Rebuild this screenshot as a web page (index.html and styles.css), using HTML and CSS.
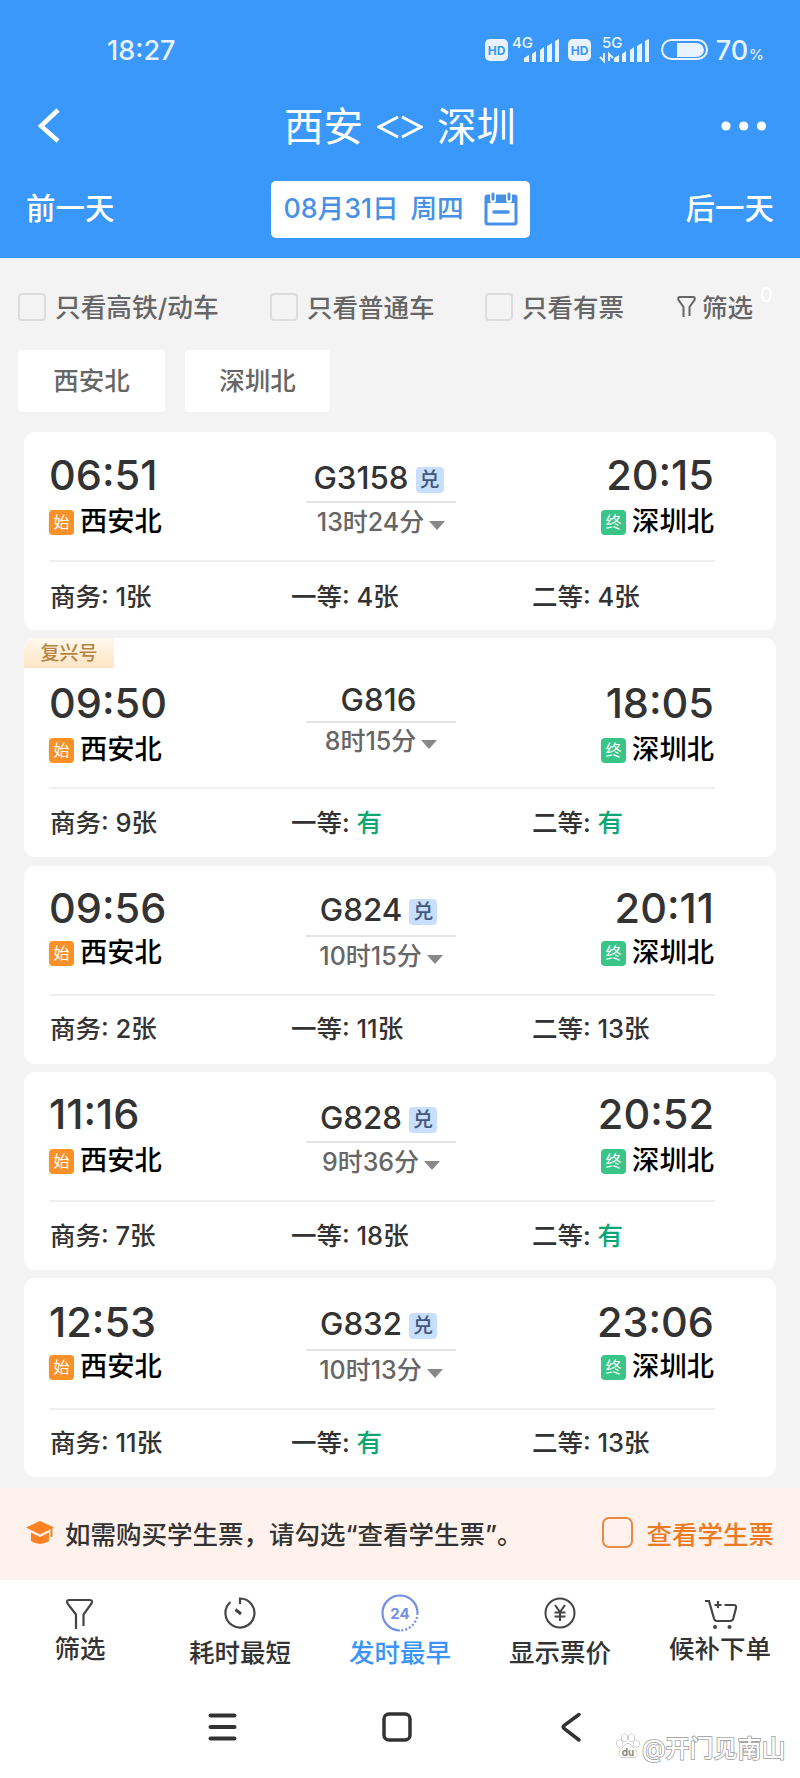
FILE: index.html
```html
<!DOCTYPE html>
<html lang="zh-CN">
<head>
    <meta charset="UTF-8">
    <title>西安 - 深圳 车票查询</title>
    <link rel="stylesheet" href="styles.css">
</head>
<body>
    <div class="header">
        <div class="status-bar">
            <span class="clock">18:27</span>
            <svg class="status-icons" width="225" height="44" viewBox="0 -8 225 44">
                <g fill="#e8f3ff">
                    <rect x="1" y="4" width="23" height="22" rx="5"/>
                    <rect x="84" y="4" width="23" height="22" rx="5"/>
                    <path d="M40 23l5-3v7h-5zM48 19l4-3v11h-4zM56 15l4-3v15h-4zM63 11l5-3v19h-5zM71 6l4-2v23h-4z"/>
                    <path d="M130 23l5-3v7h-5zM138 19l4-3v11h-4zM146 15l4-3v15h-4zM153 11l5-3v19h-5zM161 6l4-2v23h-4z"/>
                    <path d="M193 8h19a8 7 0 0 1 0 14h-19z"/>
                </g>
                <rect x="178" y="5" width="45" height="19" rx="9.5" fill="none" stroke="#e8f3ff" stroke-width="2"/>
                <path d="M120 18v8l-4-4M125 26v-7l4 4" fill="none" stroke="#e8f3ff" stroke-width="2"/>
                <g class="svg-label">
                    <text x="12.5" y="19.5" font-size="12" font-weight="700" fill="#3a98fb" text-anchor="middle">HD</text>
                    <text x="95.5" y="19.5" font-size="12" font-weight="700" fill="#3a98fb" text-anchor="middle">HD</text>
                    <text x="28" y="12.5" font-size="15" fill="#e8f3ff">4G</text>
                    <text x="118" y="12.5" font-size="15" fill="#e8f3ff">5G</text>
                </g>
            </svg>
            <span class="battery">70<small>%</small></span>
        </div>
        <div class="title-bar">
            <svg width="24" height="36" viewBox="0 0 24 36"><path d="M21 2L4 18l17 15" fill="none" stroke="#fff" stroke-width="4.5"/></svg>
            <h1><span>西安</span><svg width="46" height="26" viewBox="0 0 46 26"><path d="M21 3L2 13l19 10M25 3l19 10-19 10" fill="none" stroke="#fff" stroke-width="3"/></svg><span>深圳</span></h1>
            <svg width="46" height="10" viewBox="0 0 46 10" fill="#fff"><circle cx="5" cy="5" r="4.6"/><circle cx="22.7" cy="5" r="4.6"/><circle cx="40.5" cy="5" r="4.6"/></svg>
        </div>
        <div class="day-bar">
            <span>前一天</span>
            <div class="date-box">
                <span>08月31日</span>
                <span>周四</span>
                <svg width="34" height="34" viewBox="0 0 34 34">
                    <rect x="2" y="4" width="30" height="28" rx="1.5" fill="none" stroke="#4791e6" stroke-width="3"/>
                    <path d="M2 4h30v7H2z" fill="#4791e6"/>
                    <path d="M9 3v5M25 3v5" stroke="#fff" stroke-width="6" stroke-linecap="round"/>
                    <path d="M9 2v5M25 2v5" stroke="#4791e6" stroke-width="3" stroke-linecap="round"/>
                    <path d="M10 20h14" stroke="#4791e6" stroke-width="3.6" stroke-linecap="round"/>
                </svg>
            </div>
            <span>后一天</span>
        </div>
    </div>

    <div class="filters">
        <label class="filter f1"><i class="box"></i><span>只看高铁/动车</span></label>
        <label class="filter f2"><i class="box"></i><span>只看普通车</span></label>
        <label class="filter f3"><i class="box"></i><span>只看有票</span></label>
        <div class="filter f4">
            <svg width="19" height="24" viewBox="0 0 19 24"><path d="M6.500 22V12L1.500 5Q.5 2 3 2h13q2.500 0 1.500 3L12.500 12v9" fill="none" stroke="#666" stroke-width="2"/></svg><span>筛选</span><sup>0</sup>
        </div>
    </div>
    <div class="chips">
        <span class="chip">西安北</span>
        <span class="chip">深圳北</span>
    </div>

    <div class="train-list">
        <div class="card first">
            <div class="trip">
                <div class="from"><div class="time">06:51</div><div class="station"><i class="tag start">始</i>西安北</div></div>
                <div class="middle"><div class="train">G3158<i class="exchange">兑</i></div><div class="line"></div><div class="duration">13时24分<i class="arrow"></i></div></div>
                <div class="to"><div class="time">20:15</div><div class="station"><i class="tag end">终</i>深圳北</div></div>
            </div>
            <div class="seats"><span>商务: 1张</span><span>一等: 4张</span><span>二等: 4张</span></div>
        </div>

        <div class="card fuxing-card">
            <div class="fuxing">复兴号</div>
            <div class="trip">
                <div class="from"><div class="time">09:50</div><div class="station"><i class="tag start">始</i>西安北</div></div>
                <div class="middle"><div class="train">G816</div><div class="line"></div><div class="duration">8时15分<i class="arrow"></i></div></div>
                <div class="to"><div class="time">18:05</div><div class="station"><i class="tag end">终</i>深圳北</div></div>
            </div>
            <div class="seats"><span>商务: 9张</span><span>一等: <b>有</b></span><span>二等: <b>有</b></span></div>
        </div>

        <div class="card third">
            <div class="trip">
                <div class="from"><div class="time">09:56</div><div class="station"><i class="tag start">始</i>西安北</div></div>
                <div class="middle"><div class="train">G824<i class="exchange">兑</i></div><div class="line"></div><div class="duration">10时15分<i class="arrow"></i></div></div>
                <div class="to"><div class="time">20:11</div><div class="station"><i class="tag end">终</i>深圳北</div></div>
            </div>
            <div class="seats"><span>商务: 2张</span><span>一等: 11张</span><span>二等: 13张</span></div>
        </div>

        <div class="card">
            <div class="trip">
                <div class="from"><div class="time">11:16</div><div class="station"><i class="tag start">始</i>西安北</div></div>
                <div class="middle"><div class="train">G828<i class="exchange">兑</i></div><div class="line"></div><div class="duration">9时36分<i class="arrow"></i></div></div>
                <div class="to"><div class="time">20:52</div><div class="station"><i class="tag end">终</i>深圳北</div></div>
            </div>
            <div class="seats"><span>商务: 7张</span><span>一等: 18张</span><span>二等: <b>有</b></span></div>
        </div>

        <div class="card last">
            <div class="trip">
                <div class="from"><div class="time">12:53</div><div class="station"><i class="tag start">始</i>西安北</div></div>
                <div class="middle"><div class="train">G832<i class="exchange">兑</i></div><div class="line"></div><div class="duration">10时13分<i class="arrow"></i></div></div>
                <div class="to"><div class="time">23:06</div><div class="station"><i class="tag end">终</i>深圳北</div></div>
            </div>
            <div class="seats"><span>商务: 11张</span><span>一等: <b>有</b></span><span>二等: 13张</span></div>
        </div>
    </div>

    <div class="student-bar">
        <svg width="28" height="24" viewBox="0 0 28 24" fill="#fb8122">
            <path d="M14 0L0 6.500 14 13.500 28 6.500z"/>
            <path d="M5 11.500l9 4.500 9-4.500V20q-9 6-18 0z"/>
            <path d="M25.500 7v9" stroke="#fb8122" stroke-width="2"/>
        </svg>
        <span class="student-tip">如需购买学生票，请勾选“查看学生票”。</span>
        <label class="student-check"><i></i>查看学生票</label>
    </div>

    <div class="tabs">
        <div class="tab up">
            <svg width="38" height="38" viewBox="0 0 38 38" fill="none" stroke="#444" stroke-width="2.200"><path d="M15 35V20.500L6.500 9.500Q5 6 8 6h21q3 0 1.500 3.500L22.500 20.500V32"/></svg>
            <span>筛选</span>
        </div>
        <div class="tab">
            <svg width="38" height="38" viewBox="0 0 38 38" fill="none" stroke="#444" stroke-width="2.200"><path d="M19 10V4.500a14.500 14.500 0 1 1-9.500 3.500"/><path d="M14.500 15.500l5.500 4.500" stroke-width="3"/></svg>
            <span>耗时最短</span>
        </div>
        <div class="tab active">
            <svg width="38" height="38" viewBox="0 0 38 38" fill="none" stroke="#7190e6" stroke-width="2.200">
                <path d="M19 36.500A17.500 17.500 0 1 1 36.500 19"/>
                <path d="M36.500 19A17.500 17.500 0 0 1 19 36.500" stroke-dasharray="2 2"/>
                <text class="svg-label" x="19" y="24.500" font-size="15" font-weight="700" fill="#7190e6" stroke="none" text-anchor="middle">24</text>
            </svg>
            <span>发时最早</span>
        </div>
        <div class="tab">
            <svg width="38" height="38" viewBox="0 0 38 38" fill="none" stroke="#444" stroke-width="2"><circle cx="19" cy="19" r="14.500"/><path d="M14 11l5 7 5-7M19 18v9M13.500 18.500h11M13.500 22.500h11"/></svg>
            <span>显示票价</span>
        </div>
        <div class="tab up">
            <svg width="38" height="38" viewBox="0 0 38 38" fill="none" stroke="#444" stroke-width="2.200"><path d="M4 7h4l5 17.500q.8 2.500 3 2.500h13q2.500 0 3.300-2.500L35 14q.5-3-2-3H23.500M17 7v7M13.500 11h7"/><g fill="#444" stroke="none"><circle cx="14" cy="33" r="2"/><circle cx="28.500" cy="33" r="2"/></g></svg>
            <span>候补下单</span>
        </div>
    </div>

    <div class="nav-bar">
        <svg width="34" height="34" viewBox="0 0 34 34"><path d="M4.500 5.500h24M4.500 17h24M4.500 28.500h24" stroke="#333" stroke-width="4" stroke-linecap="round"/></svg>
        <svg width="34" height="34" viewBox="0 0 34 34"><rect x="4" y="4" width="26" height="26" rx="5" fill="none" stroke="#333" stroke-width="3.500"/></svg>
        <svg width="34" height="34" viewBox="0 0 34 34"><path d="M25 4.500L10 15.500q-1.500 1.500 0 3L25 30" fill="none" stroke="#333" stroke-width="3.500" stroke-linecap="round"/></svg>
        <div class="watermark">
            <svg width="24" height="26" viewBox="0 0 24 26" fill="#fff" stroke="#999" stroke-width="1">
                <ellipse cx="3.500" cy="10.500" rx="2.700" ry="3.500"/><ellipse cx="8.500" cy="4.800" rx="2.900" ry="3.800"/><ellipse cx="15.500" cy="4.800" rx="2.900" ry="3.800"/><ellipse cx="20.500" cy="10.500" rx="2.700" ry="3.500"/>
                <path d="M12 10.500q2.500 0 4.500 3.500 5 4 4.500 7.500-1 3.500-5 3-4-.7-8 0-4 .5-5-3-.5-3.500 4.500-7.500 2-3.500 4.500-3.500z"/>
                <text class="svg-label" x="12" y="22.500" font-size="10" font-weight="700" fill="#888" stroke="none" text-anchor="middle">du</text>
            </svg>
            <span>@开门见南山</span>
        </div>
    </div>
</body>
</html>
```
FILE: styles.css
```css
* {
    box-sizing: border-box;
}

body {
    width: 800px;
    height: 1778px;
    margin: 0;
    background-color: #f3f3f3;
    color: #333;
    font-family: Inter, "Noto Sans CJK SC", sans-serif;
    font-size: 25.5px;
    font-weight: 500;
    overflow: hidden;
}

i {
    font-style: normal;
}

svg {
    display: block;
    flex-shrink: 0;
}

.svg-label {
    font-family: Inter, "Noto Sans CJK SC", sans-serif;
}

/* header */
.header {
    height: 258px;
    background-color: #3a98fb;
    color: #fff;
}

.status-bar {
    display: flex;
    height: 84px;
    padding: 16px 36px 0 107px;
    align-items: center;
    color: #e8f3ff;
}

.clock {
    width: 377px;
    font-size: 27px;
}

.status-icons {
    margin-top: -3px;
}

.battery {
    margin-left: 7px;
    font-size: 27px;
    white-space: nowrap;
}

.battery small {
    margin-left: 1px;
    font-size: 15px;
}

.title-bar {
    display: flex;
    height: 84px;
    padding: 0 33px 0 37px;
    align-items: center;
    justify-content: space-between;
}

.title-bar h1 {
    display: flex;
    margin: 2px 0 0 18px;
    align-items: center;
    gap: 14px;
    font-size: 39.5px;
    font-weight: 400;
    line-height: 50px;
}

.day-bar {
    display: flex;
    height: 82px;
    padding: 0 26px;
    align-items: center;
    justify-content: space-between;
    font-size: 29.5px;
    line-height: 40px;
}

.day-bar > span {
    margin-top: -2px;
}

.date-box {
    display: flex;
    width: 259px;
    height: 57px;
    padding: 0 12px 0 13px;
    align-items: center;
    justify-content: space-between;
    border-radius: 5px;
    background-color: #fff;
    color: #4791e6;
    font-size: 26.7px;
}

.date-box span {
    margin-top: -2px;
}

.date-box svg {
    margin-left: 8px;
}

/* filters */
.filters {
    display: flex;
    height: 98px;
    padding-left: 18px;
    align-items: center;
    color: #666;
}

.filter {
    display: flex;
    align-items: center;
    white-space: nowrap;
}

.filter span {
    margin-top: -3px;
}

.f1 {
    width: 252px;
    font-size: 25.7px;
}

.f2 {
    width: 215px;
}

.f3 {
    width: 192px;
}

.box {
    width: 28px;
    height: 28px;
    margin-right: 9px;
    border: 2px solid #dcdcdc;
    border-radius: 4px;
}

.f4 svg {
    margin-right: 6px;
}

.f4 sup {
    margin: -25px 0 0 7px;
    color: #fff;
    font-size: 20px;
}

.chips {
    display: flex;
    height: 76px;
    margin-top: -6px;
    padding-left: 18px;
    gap: 20px;
}

.chip {
    width: 147px;
    height: 62px;
    border-radius: 4px;
    background-color: #fff;
    color: #666;
    line-height: 61px;
    text-align: center;
}

.chip + .chip {
    width: 145px;
}

/* train list */
.train-list {
    display: flex;
    height: 1062px;
    padding: 6px 24px 0;
    flex-direction: column;
    gap: 8px;
}

.card {
    height: 198px;
    flex-shrink: 0;
    padding: 0 25px;
    border-radius: 11px;
    background-color: #fff;
}

.trip {
    display: grid;
    width: 666px;
    height: 130px;
    grid-template-columns: 257px 150px 258px;
    border-bottom: 2px solid #efefef;
}

.from, .to {
    padding-top: 20px;
}

.to {
    display: flex;
    flex-direction: column;
    align-items: flex-end;
}

.time {
    font-size: 41.5px;
    font-weight: 550;
    line-height: 44px;
}

.station {
    display: flex;
    margin-top: 5px;
    align-items: center;
    color: #000;
    font-size: 27.3px;
    line-height: 40px;
}

.tag {
    width: 25px;
    height: 25px;
    margin-right: 6px;
    border-radius: 4px;
    color: #fff;
    font-size: 16px;
    font-weight: 400;
    line-height: 24px;
    text-align: center;
}

.start {
    background-color: #fa9128;
}

.end {
    background-color: #39c488;
}

.middle {
    padding-top: 28px;
}

.train {
    display: flex;
    padding-right: 5px;
    align-items: center;
    justify-content: center;
    font-size: 31.3px;
    line-height: 36px;
}

.exchange {
    width: 28px;
    height: 26px;
    margin: 4px 0 0 7px;
    border-radius: 4px;
    background-color: #c8dffd;
    color: #3f587c;
    font-size: 20px;
    line-height: 27px;
    text-align: center;
}

.line {
    height: 2px;
    margin: 5px 0;
    background-color: #e4e4e4;
}

.duration {
    display: flex;
    align-items: center;
    justify-content: center;
    color: #666;
    font-size: 25px;
    line-height: 28px;
}

.arrow {
    margin: 7px 0 0 5px;
    border: 8px solid transparent;
    border-top: 9px solid #888;
    border-bottom: 0;
}

.seats {
    display: grid;
    padding: 17px 0 0 1px;
    grid-template-columns: 241px 241px 200px;
    line-height: 34px;
    white-space: nowrap;
}

.seats b {
    color: #0aa772;
    font-weight: 500;
}

.first .from, .first .to {
    padding-top: 21px;
}

.first .seats {
    padding-top: 18px;
}

.third .station {
    margin-top: 3px;
}

.third .middle {
    padding-top: 26px;
}

.third .line {
    margin: 7px 0 5px;
}

.third .seats {
    padding-top: 16px;
}

.last {
    height: 199px;
}

.last .trip {
    height: 132px;
}

.last .from, .last .to {
    padding-top: 22px;
}

.last .station {
    margin-top: 3px;
}

.last .line {
    margin: 7px 0 5px;
}

.last .seats {
    padding-top: 16px;
}

.fuxing-card {
    height: 219px;
    margin-bottom: 1px;
    overflow: hidden;
}

.fuxing {
    width: 90px;
    height: 30px;
    margin: 0 0 -9px -25px;
    background: linear-gradient(#fff8ed, #fee5c4);
    color: #b58442;
    font-size: 19px;
    line-height: 31px;
    text-align: center;
}

.fuxing-card .from, .fuxing-card .to {
    padding-top: 22px;
}

.fuxing-card .middle {
    padding-top: 23px;
}

.fuxing-card .line {
    margin: 3px 0 4px;
}

/* student ticket bar */
.student-bar {
    display: flex;
    height: 92px;
    padding: 0 26px 3px 26px;
    align-items: center;
    background-color: #fff1eb;
}

.student-tip {
    margin-left: 11px;
    white-space: nowrap;
}

.student-check {
    display: flex;
    margin-left: auto;
    align-items: center;
    color: #ec7a23;
}

.student-check i {
    width: 31px;
    height: 31px;
    margin-right: 13px;
    border: 2px solid #ee8844;
    border-radius: 7px;
}

/* bottom */
.tabs {
    display: flex;
    height: 98px;
    padding-top: 14px;
    background-color: #fff;
}

.tab {
    display: flex;
    width: 160px;
    flex-direction: column;
    align-items: center;
    gap: 6px;
    line-height: 30px;
}

.up {
    gap: 2px;
}

.active {
    color: #3a94fa;
}

.nav-bar {
    display: flex;
    height: 100px;
    padding: 32px 16px 0 206px;
    gap: 140px;
    background-color: #fff;
}

.watermark {
    display: flex;
    height: 28px;
    margin: 22px 0 0 -112px;
    align-items: center;
    gap: 2px;
    color: #fff;
    font-size: 24px;
    white-space: nowrap;
    -webkit-text-stroke: 1.5px #999;
    paint-order: stroke;
}
```
